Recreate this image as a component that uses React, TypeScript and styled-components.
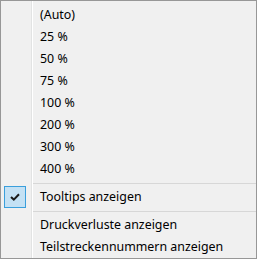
import React from "react";
import styled, { createGlobalStyle } from "styled-components";

const Global = createGlobalStyle`
  html, body { margin: 0; padding: 0; background: #ffffff; }
  * { box-sizing: border-box; }
`;

const Menu = styled.div`
  width: 257px;
  height: 259px;
  border: 1px solid #979797;
  background:
    linear-gradient(
      to right,
      transparent 30px,
      #e2e3e3 30px,
      #e2e3e3 31px,
      #ffffff 31px,
      #ffffff 32px,
      transparent 32px
    ),
    #f0f0f0;
  padding: 3px 0 0 0;
  display: flex;
  flex-direction: column;
  font-family: "Segoe UI", "Noto Sans", "Open Sans", sans-serif;
  font-size: 12.4px;
  color: #000;
`;

const Item = styled.div`
  height: 22px;
  flex: none;
  display: grid;
  grid-template-columns: 39px 1fr;
  align-items: center;
  white-space: nowrap;
`;

const Gutter = styled.div`
  display: flex;
  align-items: center;
  padding-left: 3px;
  height: 22px;
`;

const CheckBox = styled.div`
  width: 22px;
  height: 22px;
  background: #c4e1f4;
  border: 1px solid #3a9fdc;
  display: flex;
  align-items: center;
  justify-content: center;
`;

const Label = styled.span`
  line-height: 22px;
`;

const Separator = styled.div<{ $h: number }>`
  height: ${(p) => p.$h}px;
  flex: none;
  display: flex;
  align-items: center;
  padding-left: 32px;
  &::after {
    content: "";
    display: block;
    flex: 1;
    height: 1px;
    background: #d7d7d7;
  }
`;

const zoomItems = ["(Auto)", "25 %", "50 %", "75 %", "100 %", "200 %", "300 %", "400 %"];

const Check = () => (
  <svg width="10" height="8" viewBox="0 0 10 8">
    <path d="M1 4 L3.8 6.6 L9 1.2" fill="none" stroke="#1a1a1a" strokeWidth="2" />
  </svg>
);

export default function App() {
  return (
    <>
      <Global />
      <Menu>
        {zoomItems.map((t) => (
          <Item key={t}>
            <Gutter />
            <Label>{t}</Label>
          </Item>
        ))}
        <Separator $h={6} />
        <Item>
          <Gutter>
            <CheckBox>
              <Check />
            </CheckBox>
          </Gutter>
          <Label>Tooltips anzeigen</Label>
        </Item>
        <Separator $h={6} />
        <Item>
          <Gutter />
          <Label>Druckverluste anzeigen</Label>
        </Item>
        <Item>
          <Gutter />
          <Label>Teilstreckennummern anzeigen</Label>
        </Item>
      </Menu>
    </>
  );
}
